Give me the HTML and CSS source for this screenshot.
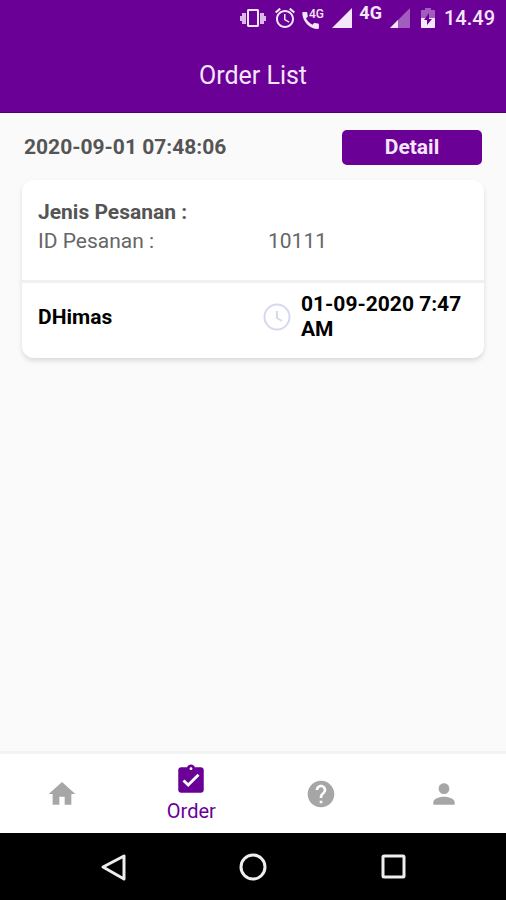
FILE: index.html
```html
<!DOCTYPE html>
<html lang="id">
<head>
    <meta charset="UTF-8">
    <meta name="viewport" content="width=device-width, initial-scale=1.0">
    <title>Order List</title>
    <link rel="stylesheet" href="styles.css">
</head>
<body>
    <div class="app">
        <header class="app-header">
            <div class="status-bar">
                <svg class="status-icon vibrate" viewBox="0 0 26 24">
                    <path d="M0 10h2v5H0zM2 7h4v11H2zM24 10h2v5h-2zM20 7h4v11h-4z" opacity=".8"/>
                    <path d="M17.500 3h-9C7.670 3 7 3.670 7 4.500v15c0 .83.67 1.500 1.500 1.500h9c.83 0 1.500-.67 1.500-1.500v-15c0-.83-.67-1.500-1.500-1.500zM17 19H9V5h8v14z"/>
                </svg>
                <svg class="status-icon alarm" viewBox="0 0 24 24">
                    <path d="M22 5.720l-4.600-3.860-1.290 1.530 4.600 3.860L22 5.720zM7.880 3.390L6.600 1.860 2 5.710l1.290 1.530 4.590-3.850zM12.500 8H11v6l4.750 2.850.75-1.230-4-2.370V8zM12 4c-4.970 0-9 4.030-9 9s4.020 9 9 9c4.970 0 9-4.030 9-9s-4.030-9-9-9zm0 16c-3.870 0-7-3.130-7-7s3.130-7 7-7 7 3.130 7 7-3.130 7-7 7z"/>
                </svg>
                <svg class="status-icon call" viewBox="0 0 24 24">
                    <path d="M17 17.500c-1.200 0-2.200-.2-3.200-.5-.4-.1-.8 0-1 .3l-1.300 1.500C8.800 17.500 6.200 15 5 12.300l1.500-1.300c.3-.3.4-.6.3-1-.4-1-.5-2.100-.5-3.200 0-.5-.4-.9-.9-.9H2.500c-.6 0-1.200.3-1.200.9C1.300 15.800 8.700 23 17 23c.6 0 .9-.6.9-1.200v-3.400c0-.5-.4-.9-.9-.9z"/>
                    <text class="call-label" x="8" y="12">4G</text>
                </svg>
                <svg class="status-icon signal" viewBox="0 0 20 20">
                    <path d="M0 20h20V0z"/>
                </svg>
                <span class="network">4G</span>
                <svg class="status-icon signal weak" viewBox="0 0 20 20">
                    <path opacity=".4" d="M0 20h20V0z"/>
                    <path d="M0 20h8v-8z"/>
                </svg>
                <svg class="status-icon battery" viewBox="0 0 14 20">
                    <path opacity=".4" d="M4 0h6v2h3c.6 0 1 .4 1 1v7H0V3c0-.6.4-1 1-1h3z"/>
                    <path d="M0 10h14v9c0 .6-.4 1-1 1H1c-.6 0-1-.4-1-1z"/>
                    <path class="bolt" d="M8 5v6h3l-5 6v-5H3z"/>
                </svg>
                <span class="time">14.49</span>
            </div>
            <h1 class="title">Order List</h1>
        </header>

        <main class="content">
            <div class="order-head">
                <span class="order-date">2020-09-01 07:48:06</span>
                <button class="detail-btn" type="button">Detail</button>
            </div>

            <div class="card">
                <div class="card-info">
                    <div class="card-type">Jenis Pesanan :</div>
                    <div class="card-row">
                        <span>ID Pesanan :</span>
                        <span>10111</span>
                    </div>
                </div>
                <div class="card-footer">
                    <span class="customer">DHimas</span>
                    <div class="schedule">
                        <svg class="clock" viewBox="0 0 28 28">
                            <circle cx="14" cy="14" r="12.500"/>
                            <path d="M14 8v7l5 3"/>
                        </svg>
                        <span>01-09-2020 7:47 AM</span>
                    </div>
                </div>
            </div>
        </main>

        <nav class="tabs">
            <a class="tab" href="#" aria-label="Home">
                <svg viewBox="0 0 24 24"><path d="M10 20v-6h4v6h5v-8h3L12 3 2 12h3v8z"/></svg>
            </a>
            <a class="tab active" href="#">
                <svg viewBox="0 0 24 24"><path d="M19 3h-4.180C14.400 1.840 13.300 1 12 1c-1.300 0-2.400.84-2.820 2H5c-1.100 0-2 .9-2 2v14c0 1.100.9 2 2 2h14c1.100 0 2-.9 2-2V5c0-1.100-.9-2-2-2zm-7 0c.55 0 1 .45 1 1s-.45 1-1 1-1-.45-1-1 .45-1 1-1zm-2 14l-4-4 1.410-1.410L10 14.170l6.590-6.590L18 9l-8 8z"/></svg>
                <span>Order</span>
            </a>
            <a class="tab" href="#" aria-label="Help">
                <svg viewBox="0 0 24 24"><path d="M12 2C6.480 2 2 6.480 2 12s4.480 10 10 10 10-4.480 10-10S17.520 2 12 2zm1 17h-2v-2h2v2zm2.070-7.750l-.9.92C13.450 12.900 13 13.500 13 15h-2v-.5c0-1.100.45-2.100 1.170-2.830l1.240-1.260c.37-.36.59-.86.59-1.410 0-1.100-.9-2-2-2s-2 .9-2 2H8c0-2.210 1.790-4 4-4s4 1.790 4 4c0 .88-.36 1.680-.93 2.250z"/></svg>
            </a>
            <a class="tab" href="#" aria-label="Profile">
                <svg viewBox="0 0 24 24"><path d="M12 12c2.210 0 4-1.790 4-4s-1.790-4-4-4-4 1.790-4 4 1.790 4 4 4zm0 2c-2.670 0-8 1.340-8 4v2h16v-2c0-2.660-5.330-4-8-4z"/></svg>
            </a>
        </nav>

        <div class="system-nav">
            <button type="button" aria-label="Back">
                <svg viewBox="0 0 28 28"><path d="M25 3v23L4 14z"/></svg>
            </button>
            <button type="button" aria-label="Home screen">
                <svg viewBox="0 0 28 28"><circle cx="14" cy="14" r="12"/></svg>
            </button>
            <button type="button" aria-label="Recent apps">
                <svg viewBox="0 0 28 28"><rect x="4" y="3" width="21" height="21" rx="1"/></svg>
            </button>
        </div>
    </div>
</body>
</html>
```
FILE: styles.css
```css
:root {
    --purple: #6a0096;
    --page-bg: #fafafa;
    --text-grey: #555555;
    --icon-grey: #a6a6a6;
}

* {
    box-sizing: border-box;
}

body {
    margin: 0;
    background-color: var(--page-bg);
    font-family: Roboto, "Liberation Sans", sans-serif;
    font-size: 21px;
    line-height: 25px;
}

.app {
    min-height: 100vh;
    display: flex;
    flex-direction: column;
}

/* Header */
.app-header {
    background-color: var(--purple);
    color: #f6e6fb;
    padding-bottom: 22px;
    border-bottom: 1px solid #4d0070;
}

.status-bar {
    display: flex;
    align-items: center;
    justify-content: flex-end;
    height: 36px;
    padding-right: 11px;
    fill: currentColor;
}

.status-icon {
    height: 24px;
    width: 24px;
    flex: none;
}

.vibrate {
    width: 26px;
    margin-right: 7px;
}

.alarm {
    margin-right: 4px;
}

.call {
    margin-right: 7px;
}

.call-label {
    font-size: 12px;
    font-weight: 500;
}

.signal {
    width: 20px;
    height: 20px;
    margin-right: 7px;
}

.signal.weak {
    margin-right: 11px;
}

.network {
    align-self: flex-start;
    font-size: 18px;
    font-weight: 700;
    margin-right: 8px;
}

.battery {
    width: 14px;
    height: 20px;
    margin-right: 9px;
}

.bolt {
    fill: var(--purple);
}

.time {
    font-size: 20px;
    font-weight: 500;
}

.title {
    margin: 0;
    padding-top: 26px;
    font-size: 25px;
    line-height: 28px;
    font-weight: 400;
    text-align: center;
}

/* Order */
.content {
    flex: 1;
    padding: 17px 22px 24px;
}

.order-head {
    display: flex;
    align-items: center;
    justify-content: space-between;
    padding: 0 2px;
    margin-bottom: 15px;
}

.order-date {
    color: var(--text-grey);
    font-weight: 700;
}

.detail-btn {
    width: 140px;
    height: 35px;
    padding: 0;
    border: none;
    border-radius: 5px;
    background-color: var(--purple);
    color: #f6e6fb;
    font: inherit;
    font-weight: 700;
    cursor: pointer;
}

.card {
    background-color: #ffffff;
    border-radius: 12px;
    box-shadow: 0 3px 5px rgba(0, 0, 0, 0.12);
}

.card-info {
    padding: 18px 16px 24px;
    border-bottom: 3px solid #f0f0f0;
    color: var(--text-grey);
}

.card-type {
    font-weight: 700;
    line-height: 29px;
}

.card-row {
    display: grid;
    grid-template-columns: 230px 1fr;
    line-height: 29px;
    color: #666666;
}

.card-footer {
    display: grid;
    grid-template-columns: 225px 1fr;
    align-items: center;
    padding: 9px 16px 16px;
    font-weight: 700;
    color: #000000;
}

.schedule {
    display: flex;
    align-items: center;
    gap: 10px;
}

.clock {
    width: 28px;
    height: 28px;
    flex: none;
    fill: none;
    stroke: #d5d8ee;
    stroke-width: 2;
}

/* Bottom tabs */
.tabs {
    display: flex;
    height: 82px;
    background-color: #ffffff;
    border-top: 3px solid #f3f3f3;
}

.tab {
    flex: 1;
    display: flex;
    flex-direction: column;
    align-items: center;
    justify-content: center;
    color: var(--icon-grey);
    font-size: 20px;
    text-decoration: none;
}

.tab svg {
    width: 32px;
    height: 32px;
    fill: currentColor;
}

.tab.active {
    flex: 0 0 136px;
    color: var(--purple);
}

.tab.active svg {
    width: 34px;
    height: 34px;
    margin-bottom: 2px;
}

/* Android navigation */
.system-nav {
    display: flex;
    align-items: center;
    justify-content: center;
    gap: 112px;
    height: 67px;
    background-color: #000000;
}

.system-nav button {
    display: flex;
    padding: 0;
    border: none;
    background: none;
    cursor: pointer;
}

.system-nav svg {
    width: 28px;
    height: 28px;
    fill: none;
    stroke: #eeeeee;
    stroke-width: 3;
    stroke-linejoin: round;
}
```
